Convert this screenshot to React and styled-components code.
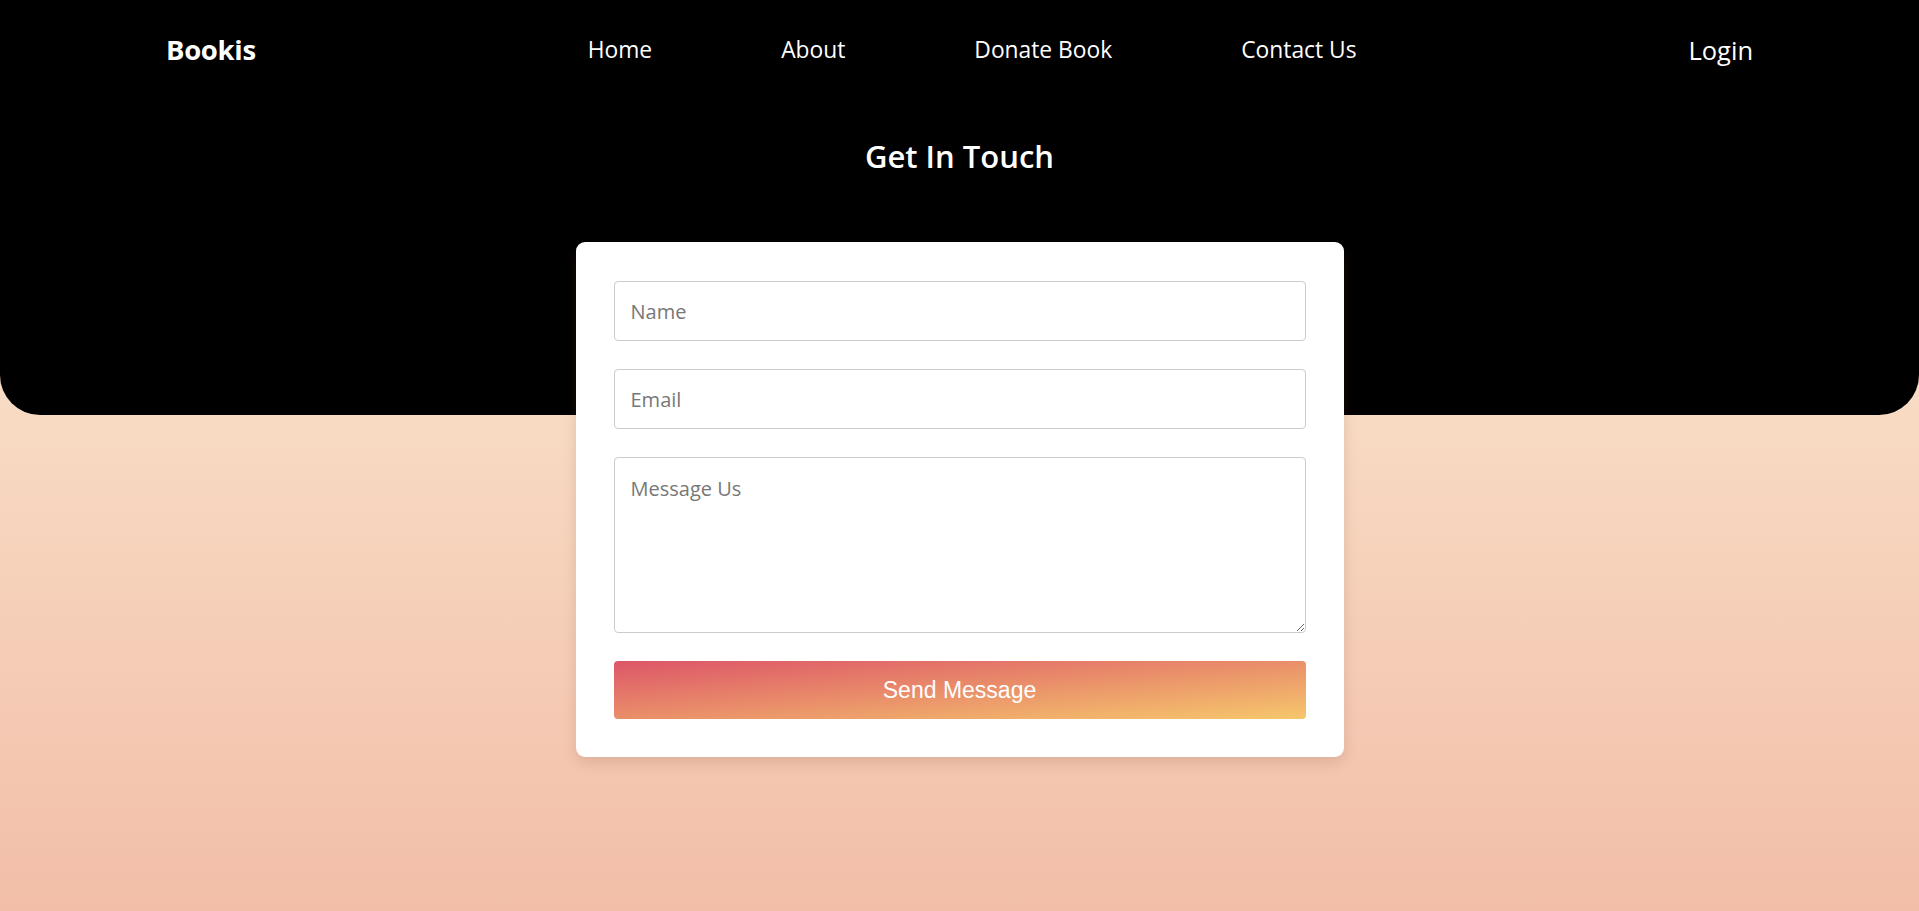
import React from "react";
import styled, { createGlobalStyle } from "styled-components";

const GlobalStyle = createGlobalStyle`
  * {
    box-sizing: border-box;
  }
  html, body {
    margin: 0;
    padding: 0;
  }
  body {
    min-height: 100vh;
    font-family: "Open Sans", "Noto Sans", sans-serif;
    background: linear-gradient(to bottom, #fdeeda 0%, #f8dac3 46%, #f2bea8 100%);
  }
`;

const Page = styled.div`
  min-height: 100vh;
  display: flex;
  flex-direction: column;
`;

const Header = styled.header`
  background-color: #000;
  color: #fff;
  height: 415px;
  border-radius: 0 0 40px 40px;
  display: flex;
  flex-direction: column;
  align-items: center;
`;

const NavBar = styled.nav`
  width: 100%;
  height: 99px;
  display: flex;
  align-items: center;
  justify-content: space-around;
`;

const Logo = styled.div`
  font-size: 27.5px;
  font-weight: 700;
  letter-spacing: -0.3px;
`;

const NavLinks = styled.ul`
  list-style: none;
  margin: 0;
  padding: 0;
  display: flex;
  gap: 129px;
`;

const NavLink = styled.li`
  font-size: 22.8px;
  cursor: pointer;
`;

const LoginLink = styled.div`
  font-size: 25.5px;
  cursor: pointer;
`;

const Title = styled.h2`
  margin: 36px 0 0;
  font-size: 31px;
  font-weight: 600;
`;

const Section = styled.section`
  display: flex;
  justify-content: center;
  margin-top: -173px;
  padding-bottom: 60px;
`;

const Card = styled.form`
  width: 768px;
  background-color: #fff;
  border-radius: 9px;
  padding: 39px 38px 38px;
  box-shadow: 0 6px 14px rgba(120, 70, 50, 0.18);
  display: flex;
  flex-direction: column;
  gap: 28px;
`;

const Field = styled.input`
  width: 100%;
  height: 60px;
  padding: 0 16px;
  border: 1px solid #cccccc;
  border-radius: 4px;
  font-family: "Open Sans", "Noto Sans", sans-serif;
  font-size: 20px;
  color: #333;
  outline: none;

  &::placeholder {
    color: #777;
  }
`;

const MessageBox = styled.textarea`
  width: 100%;
  height: 176px;
  padding: 17px 16px;
  border: 1px solid #cccccc;
  border-radius: 4px;
  font-family: "Open Sans", "Noto Sans", sans-serif;
  font-size: 20px;
  color: #333;
  outline: none;
  resize: vertical;
  display: block;

  &::placeholder {
    color: #777;
  }
`;

const SendButton = styled.button`
  width: 100%;
  height: 58px;
  border: none;
  border-radius: 4px;
  background: linear-gradient(to bottom right, #dd5668, #f6c76c);
  color: #fff;
  font-family: "Liberation Sans", Arial, sans-serif;
  font-size: 23px;
  cursor: pointer;
`;

const links = ["Home", "About", "Donate Book", "Contact Us"];

function App() {
  return (
    <Page>
      <GlobalStyle />
      <Header>
        <NavBar>
          <Logo>Bookis</Logo>
          <NavLinks>
            {links.map((link) => (
              <NavLink key={link}>{link}</NavLink>
            ))}
          </NavLinks>
          <LoginLink>Login</LoginLink>
        </NavBar>
        <Title>Get In Touch</Title>
      </Header>
      <Section>
        <Card onSubmit={(e) => e.preventDefault()}>
          <Field type="text" placeholder="Name" />
          <Field type="email" placeholder="Email" />
          <MessageBox placeholder="Message Us" />
          <SendButton type="submit">Send Message</SendButton>
        </Card>
      </Section>
    </Page>
  );
}

export default App;
